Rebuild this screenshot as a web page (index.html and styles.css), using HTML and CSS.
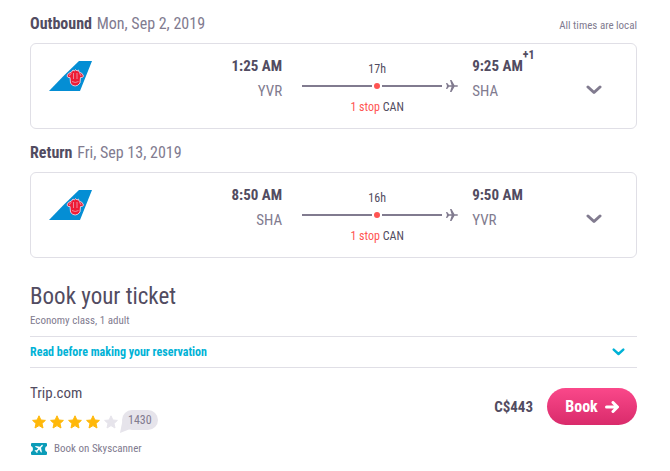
FILE: index.html
```html
<!DOCTYPE html>
<html lang="en">
<head>
    <meta charset="UTF-8">
    <meta name="viewport" content="width=device-width, initial-scale=1.0">
    <title>Book your ticket</title>
    <link rel="stylesheet" href="styles.css">
</head>
<body>
    <!-- Shared icons -->
    <svg class="sprite" aria-hidden="true">
        <symbol id="tail" viewBox="0 0 44 30">
            <path fill="#048ed4" d="M0 30 Q15 14 30 0 H43 L31 30 Z"/>
            <path fill="#ee1c35" stroke="#d9c8de" stroke-width="1" stroke-linejoin="round" d="M24 9 L25.500 10 L26.500 8.500 L28 10 L29.500 9 L30 11 Q34 12 34.500 15 Q34 17 31.500 16.500 L31 22 Q29 25 26.200 25 Q23 25 21.500 22 L21 16.500 Q18.500 17 18 15 Q18.500 12 22.500 11 Z"/>
            <path fill="none" stroke="#e9a3b8" stroke-width="0.800" d="M22.500 12.500 Q20.500 13 20.500 15 M24.500 12 V18 M28 12 V18 M30 12.500 Q32 13 32 15 M23 20.500 Q26.200 22.500 29.500 20.500"/>
        </symbol>
        <symbol id="plane" viewBox="0 0 12 12">
            <path fill="#817b8f" d="M0 3 H1.200 L3 5.300 H5.600 L4 0 H5.500 L8.500 5.300 H11 Q12 5.500 12 6 Q12 6.500 11 6.700 H8.500 L5.500 12 H4 L5.600 6.700 H3 L1.200 9 H0 L1 6 Z"/>
        </symbol>
        <symbol id="chevron" viewBox="0 0 16 10">
            <path fill="none" stroke="currentColor" stroke-width="3" stroke-linecap="round" stroke-linejoin="round" d="M2 2 L8 7.500 L14 2"/>
        </symbol>
        <symbol id="star" viewBox="0 0 14 14">
            <path fill="currentColor" stroke="currentColor" stroke-linejoin="round" d="M7 0.800 L8.900 5 L13.400 5.400 L10 8.500 L11 13 L7 10.600 L3 13 L4 8.500 L0.600 5.400 L5.100 5 Z"/>
        </symbol>
    </svg>

    <main class="page">
        <section class="leg">
            <header class="leg-header">
                <h2>Outbound <span>Mon, Sep 2, 2019</span></h2>
                <small>All times are local</small>
            </header>
            <div class="card">
                <svg class="airline" role="img" aria-label="China Southern"><use href="#tail"/></svg>
                <div class="depart">
                    <strong>1:25 AM</strong>
                    <span>YVR</span>
                </div>
                <div class="stops">
                    <span>17h</span>
                    <div class="route">
                        <i class="line"></i><i class="dot"></i><i class="line last"></i>
                        <svg class="plane"><use href="#plane"/></svg>
                    </div>
                    <span><em>1 stop</em> CAN</span>
                </div>
                <div class="arrive">
                    <strong>9:25 AM<sup>+1</sup></strong>
                    <span>SHA</span>
                </div>
                <button class="toggle" type="button" aria-label="Outbound details">
                    <svg><use href="#chevron"/></svg>
                </button>
            </div>
        </section>

        <section class="leg">
            <header class="leg-header">
                <h2>Return <span>Fri, Sep 13, 2019</span></h2>
            </header>
            <div class="card">
                <svg class="airline" role="img" aria-label="China Southern"><use href="#tail"/></svg>
                <div class="depart">
                    <strong>8:50 AM</strong>
                    <span>SHA</span>
                </div>
                <div class="stops">
                    <span>16h</span>
                    <div class="route">
                        <i class="line"></i><i class="dot"></i><i class="line last"></i>
                        <svg class="plane"><use href="#plane"/></svg>
                    </div>
                    <span><em>1 stop</em> CAN</span>
                </div>
                <div class="arrive">
                    <strong>9:50 AM</strong>
                    <span>YVR</span>
                </div>
                <button class="toggle" type="button" aria-label="Return details">
                    <svg><use href="#chevron"/></svg>
                </button>
            </div>
        </section>

        <section class="booking">
            <h1>Book your ticket</h1>
            <p class="cabin">Economy class, 1 adult</p>
            <button class="notice" type="button">
                Read before making your reservation
                <svg><use href="#chevron"/></svg>
            </button>

            <div class="offer">
                <div class="agent">
                    <h3>Trip.com</h3>
                    <div class="rating">
                        <svg class="star"><use href="#star"/></svg>
                        <svg class="star"><use href="#star"/></svg>
                        <svg class="star"><use href="#star"/></svg>
                        <svg class="star"><use href="#star"/></svg>
                        <svg class="star empty"><use href="#star"/></svg>
                        <span class="reviews">1430</span>
                    </div>
                    <p class="direct">
                        <svg viewBox="0 0 16 12">
                            <path fill="#0b9cb8" d="M1 0 H15 Q16 0 16 1 V3 Q14 3.500 14 6 Q14 8.500 16 9 V11 Q16 12 15 12 H1 Q0 12 0 11 V9 Q2 8.500 2 6 Q2 3.500 0 3 V1 Q0 0 1 0 Z"/>
                            <path fill="#fff" d="M11.500 1.800 Q12.300 2.500 11.500 3.300 L10 4.800 L10.900 9 L10.100 9.700 L8.200 6.600 L6.500 8.200 V9.700 L5.800 10.300 L5.100 8.700 L3.500 8 L4.100 7.300 H5.600 L7.200 5.600 L4 3.800 L4.700 3 L9 3.800 L10.400 2.300 Q11 1.500 11.500 1.800 Z"/>
                        </svg>
                        Book on Skyscanner
                    </p>
                </div>
                <div class="buy">
                    <strong class="price">C$443</strong>
                    <a class="book" href="#">
                        Book
                        <svg viewBox="0 0 14 12"><path fill="none" stroke="#fff" stroke-width="3" stroke-linecap="round" stroke-linejoin="round" d="M1.500 6 H12 M8 1.500 L12.500 6 L8 10.500"/></svg>
                    </a>
                </div>
            </div>
        </section>
    </main>
</body>
</html>
```

FILE: styles.css
```css
* {
    box-sizing: border-box;
}

body {
    margin: 0;
    background-color: #fff;
    color: #524c61;
    font-family: "Liberation Sans Narrow", "Arial Narrow", "Roboto Condensed", "Liberation Sans", sans-serif;
    font-size: 12px;
    line-height: 16px;
}

h1, h2, h3, p {
    margin: 0;
    font-weight: normal;
}

button {
    padding: 0;
    border: none;
    background: none;
    font: inherit;
    cursor: pointer;
}

svg {
    display: block;
    flex: none;
}

.sprite {
    position: absolute;
    width: 0;
    height: 0;
}

.page {
    padding: 14px 33px 14px 30px;
}

/* Flight legs */
.leg {
    margin-bottom: 14px;
}

.leg-header {
    display: flex;
    justify-content: space-between;
    align-items: flex-end;
    margin-bottom: 9px;
}

.leg-header h2 {
    font-size: 16px;
    font-weight: bold;
    line-height: 20px;
}

.leg-header h2 span {
    margin-left: 1px;
    color: #817b8f;
    font-weight: normal;
}

.leg-header small {
    color: #817b8f;
    font-size: 11px;
}

.card {
    display: grid;
    grid-template-columns: 44px 18fr 156px 11fr 16px;
    min-height: 86px;
    padding: 10px 34px 10px 18px;
    border: 1px solid #e0dfe6;
    border-radius: 6px;
}

.airline {
    width: 44px;
    height: 30px;
    margin-top: 7px;
}

.depart,
.arrive {
    display: flex;
    flex-direction: column;
    color: #817b8f;
    font-size: 15px;
    line-height: 25px;
}

.depart {
    padding-right: 20px;
    text-align: right;
}

.arrive {
    padding-left: 14px;
}

.depart strong,
.arrive strong {
    color: #524c61;
}

sup {
    font-size: 12px;
    line-height: 0;
    vertical-align: 12px;
}

.stops {
    display: flex;
    flex-direction: column;
    padding-top: 7px;
}

.stops > span {
    padding-right: 6px;
    text-align: center;
}

.stops em {
    color: #ff5452;
    font-style: normal;
}

.route {
    display: flex;
    align-items: center;
    height: 12px;
    margin: 3px 0 7px;
}

.line {
    flex: 7;
    height: 2px;
    background-color: #817b8f;
}

.line.last {
    flex: 6;
}

.dot {
    width: 6px;
    height: 6px;
    margin: 0 2px;
    border-radius: 50%;
    background-color: #ff5452;
}

.plane {
    width: 12px;
    height: 12px;
    margin-left: 4px;
}

.toggle {
    align-self: center;
    color: #817b8f;
}

.toggle svg {
    width: 16px;
    height: 10px;
    margin-top: 8px;
}

/* Booking */
.booking {
    padding-top: 9px;
}

.booking h1 {
    font-size: 23px;
    line-height: 32px;
}

.cabin {
    margin-bottom: 7px;
    color: #817b8f;
    font-size: 11px;
}

.notice {
    display: flex;
    justify-content: space-between;
    align-items: center;
    width: 100%;
    height: 32px;
    padding-right: 12px;
    border-top: 1px solid #e0dfe6;
    border-bottom: 1px solid #e0dfe6;
    color: #00b2d6;
    font-weight: bold;
}

.notice svg {
    width: 13px;
    height: 8px;
}

.offer {
    display: flex;
    justify-content: space-between;
    align-items: flex-start;
    padding-top: 15px;
}

.agent h3 {
    font-size: 15px;
    line-height: 20px;
}

.rating {
    display: flex;
    align-items: center;
    gap: 4px;
    padding: 7px 0 0 2px;
}

.star {
    width: 14px;
    height: 14px;
    color: #ffb80a;
    margin-top: 4px;
}

.star.empty {
    color: #e6e4eb;
}

.reviews {
    position: relative;
    height: 20px;
    padding: 0 6px;
    border-radius: 10px;
    background-color: #e6e4eb;
    color: #817b8f;
    line-height: 20px;
}

.reviews::before {
    content: "";
    position: absolute;
    left: -2px;
    bottom: -3px;
    width: 12px;
    height: 12px;
    background-color: #e6e4eb;
    clip-path: polygon(20% 0, 0 100%, 100% 60%);
}

.direct {
    display: flex;
    align-items: center;
    gap: 7px;
    padding: 11px 0 0 1px;
    color: #817b8f;
    font-size: 11px;
}

.direct svg {
    width: 16px;
    height: 12px;
}

.buy {
    display: flex;
    align-items: center;
    gap: 14px;
    padding-top: 5px;
}

.price {
    font-size: 15px;
}

.book {
    display: flex;
    justify-content: center;
    align-items: center;
    gap: 7px;
    width: 90px;
    height: 37px;
    border-radius: 19px;
    background-image: linear-gradient(#fa488a, #d92b6b);
    color: #fff;
    font-size: 16px;
    font-weight: bold;
    text-decoration: none;
}

.book svg {
    width: 14px;
    height: 12px;
}
```
